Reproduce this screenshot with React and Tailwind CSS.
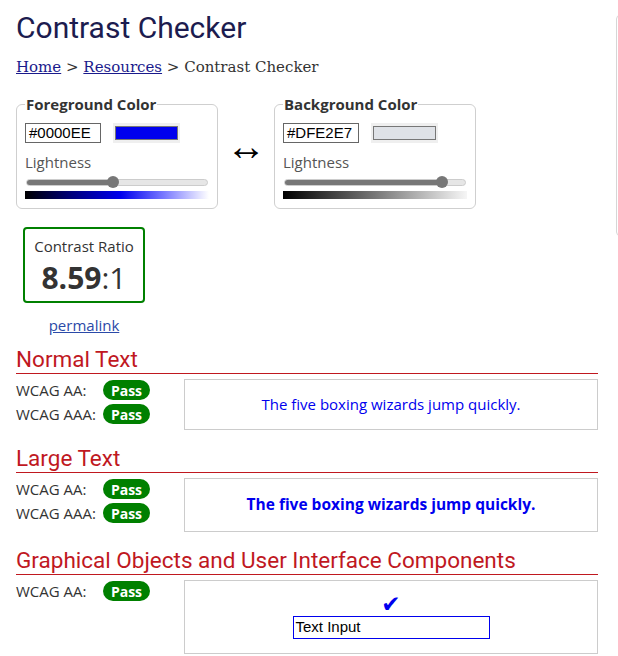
const sans = "font-['Open_Sans',sans-serif]";

function ColorField({ legend, hex, swatch, fill, gradient }) {
  return (
    <fieldset className="w-[202px] shrink-0 rounded-[6px] border border-[#cfcfcf] px-[8px] pb-[9px] pt-[9px]">
      <legend className="px-px text-[15px] font-bold leading-[20px] text-[#333]">{legend}</legend>
      <div className="flex h-[20px] items-center gap-[12px]">
        <div className="flex h-[20px] w-[76px] items-center border border-[#666] bg-white px-[3px] font-['Liberation_Sans',sans-serif] text-[15px] text-black">
          {hex}
        </div>
        <div className="flex h-[20px] w-[67px] items-center justify-center bg-[#efefef] px-[2px]">
          <div className="h-[14px] w-full border border-[#777]" style={{ background: swatch }} />
        </div>
      </div>
      <div className="mt-[9px] text-[15px] leading-[20px] text-[#555]">Lightness</div>
      <div className="mt-[4px] flex h-[12px] items-center px-px">
        <div className="relative h-[7px] w-full rounded-full border border-[#ccc] bg-[#e6e6e6]">
          <div className="h-full rounded-full bg-[#777]" style={{ width: fill }} />
          <div
            className="absolute top-1/2 h-[12px] w-[12px] -translate-x-1/2 -translate-y-1/2 rounded-full bg-[#777]"
            style={{ left: fill }}
          />
        </div>
      </div>
      <div className="mt-[3px] h-[8px] w-full" style={{ background: gradient }} />
    </fieldset>
  );
}

function Pass() {
  return (
    <span className="inline-flex h-[20px] w-[47px] items-center justify-center rounded-full bg-[#008000] text-[14px] font-bold text-white">
      Pass
    </span>
  );
}

function Row({ label }) {
  return (
    <div className="flex h-[20px] items-center">
      <span className="w-[87px] text-[15px] text-[#333]">{label}</span>
      <Pass />
    </div>
  );
}

function Section({ title, rows, boxH, first, children }) {
  return (
    <section className={first ? "mt-[11px]" : "mt-[15px]"}>
      <h2 className="border-b border-[#c0181f] font-['Roboto',sans-serif] text-[22.5px] leading-[27px] text-[#c0181f]">
        {title}
      </h2>
      <div className="mt-[5px] flex">
        <div className="flex w-[168px] shrink-0 flex-col gap-[4px] pt-px">
          {rows.map((r) => (
            <Row key={r} label={r} />
          ))}
        </div>
        <div className={`flex flex-1 flex-col items-center justify-center border border-[#cccccc] ${boxH}`}>
          {children}
        </div>
      </div>
    </section>
  );
}

export default function App() {
  return (
    <div className={`flex w-[618px] overflow-hidden bg-white ${sans}`}>
      <main className="w-[598px] shrink-0 pb-[2px] pl-4">
        <h1 className="pt-[10px] font-['Roboto',sans-serif] text-[30px] leading-[36px] text-[#1c1c4f]">
          Contrast Checker
        </h1>
        <nav className="mt-[11px] font-['DejaVu_Serif',serif] text-[15px] leading-[20px] text-[#333]">
          <a href="#" className="text-[#1a1a8c] underline">Home</a> &gt;{" "}
          <a href="#" className="text-[#1a1a8c] underline">Resources</a> &gt; Contrast Checker
        </nav>

        <div className="mt-[17px] flex items-center">
          <ColorField
            legend="Foreground Color"
            hex="#0000EE"
            swatch="#0000EE"
            fill="48%"
            gradient="linear-gradient(to right, #000 0%, #00007a 25%, #0000ee 52%, #7777ff 75%, #ffffff 100%)"
          />
          <div className="flex w-[56px] justify-center pb-[10px] font-['Liberation_Serif',serif] text-[40px] leading-none text-black">
            ↔
          </div>
          <ColorField
            legend="Background Color"
            hex="#DFE2E7"
            swatch="#DFE2E7"
            fill="87%"
            gradient="linear-gradient(to right, #000 0%, #777 50%, #f6f6f6 100%)"
          />
        </div>

        <div className="ml-[7px] mt-[18px] w-[122px]">
          <div className="flex h-[76px] flex-col items-center rounded-[4px] border-2 border-[#008000] pt-[7px]">
            <div className="text-[15px] leading-[20px] text-[#333]">Contrast Ratio</div>
            <div className="mt-[4px] text-[30px] leading-[36px] text-[#333]">
              <span className="font-bold">8.59</span>:1
            </div>
          </div>
          <div className="mt-[12px] text-center text-[15px] leading-[20px]">
            <a href="#" className="text-[#2b4aa8] underline">permalink</a>
          </div>
        </div>

        <Section first title="Normal Text" rows={["WCAG AA:", "WCAG AAA:"]} boxH="h-[51px]">
          <span className="text-[15px] text-[#0000EE]">The five boxing wizards jump quickly.</span>
        </Section>

        <Section title="Large Text" rows={["WCAG AA:", "WCAG AAA:"]} boxH="h-[54px]">
          <span className="text-[15.5px] font-bold text-[#0000EE]">The five boxing wizards jump quickly.</span>
        </Section>

        <Section title="Graphical Objects and User Interface Components" rows={["WCAG AA:"]} boxH="h-[74px]">
          <span className="-mt-[2px] font-['DejaVu_Sans',sans-serif] text-[23px] leading-[22px] text-[#0000EE]">✔</span>
          <div className="mt-[1px] flex h-[23px] w-[197px] items-center border border-[#0000EE] px-[2px] font-['Liberation_Sans',sans-serif] text-[15px] text-black">
            Text Input
          </div>
        </Section>
      </main>

      <aside className="ml-[18px] mt-[15px] flex h-[221px] w-[200px] shrink-0 flex-col rounded-[4px] border border-[#d6d6d6]">
        <span className="ml-px mt-[47px] h-[2px] w-[2px] bg-[#333]" />
        <span className="ml-px mt-[33px] h-[2px] w-[2px] bg-[#333]" />
        <span className="ml-px mt-[49px] h-[2px] w-[2px] bg-[#333]" />
        <span className="ml-px mt-[33px] h-[2px] w-[2px] bg-[#333]" />
        <span className="ml-px mt-[33px] h-[2px] w-[2px] bg-[#333]" />
      </aside>
    </div>
  );
}
